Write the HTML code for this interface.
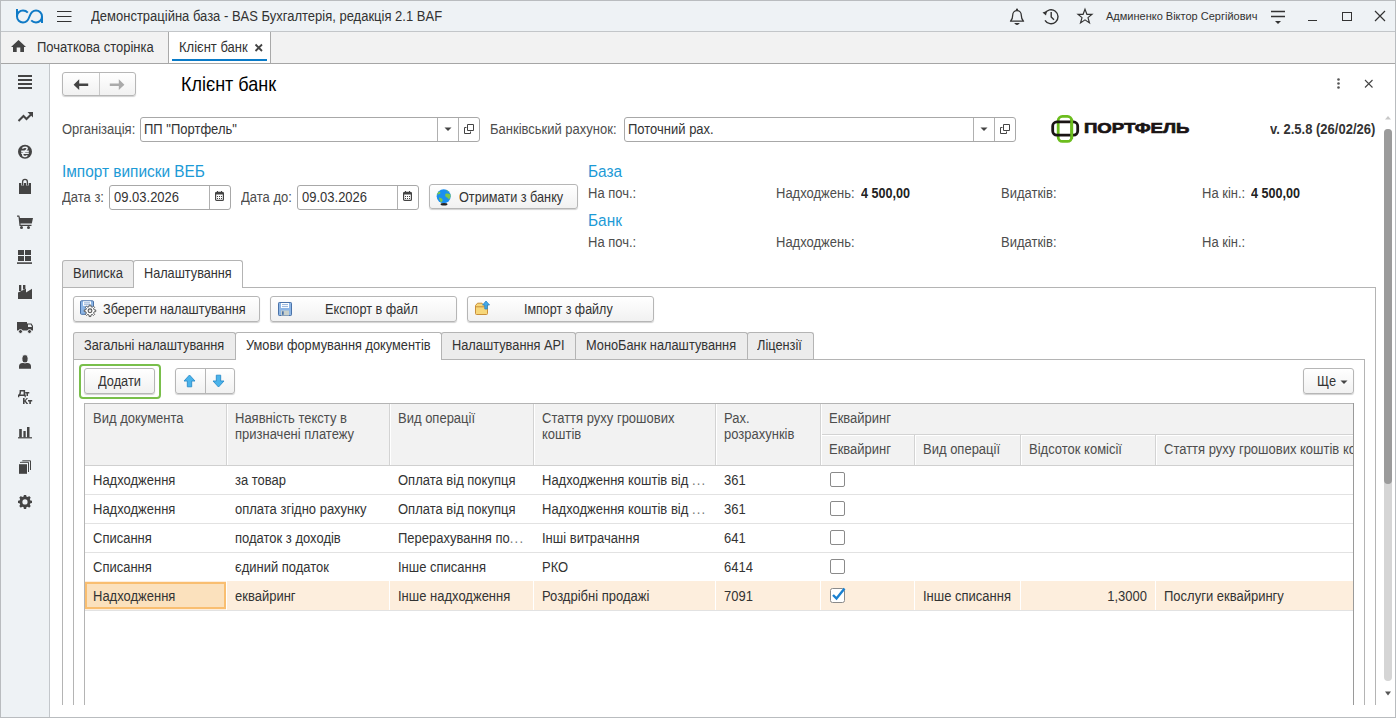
<!DOCTYPE html>
<html><head><meta charset="utf-8">
<style>
*{box-sizing:border-box;margin:0;padding:0}
html,body{width:1396px;height:718px;overflow:hidden;background:#fff;font-family:"Liberation Sans",sans-serif;font-size:13px;color:#333}
.a{position:absolute;white-space:nowrap;line-height:1;transform:scaleY(1.11);transform-origin:0 11px}
#win{position:absolute;left:0;top:0;width:1396px;height:718px;background:#fff;overflow:hidden}
.r{position:absolute}
.ico{position:absolute;overflow:visible}
.btn{position:absolute;border:1px solid #b6b6b6;border-radius:3px;background:linear-gradient(#fff,#f1f1f1);box-shadow:0 1px 1px rgba(0,0,0,.18);color:#333}
.inp{position:absolute;border:1px solid #a8a8a8;border-radius:3px;background:#fff}
.lbl{color:#4d4d4d}
</style></head><body>
<div id="win">
<!-- title bar -->
<div class="r" style="left:0;top:0;width:1396px;height:31px;background:#eef2f5"></div>
<div class="r" style="left:0;top:31px;width:1396px;height:1px;background:#c3c6c9"></div>
<svg class="ico" style="left:16px;top:9px" width="28" height="15" viewBox="0 0 28 15"><g fill="none" stroke="#0f7ac6" stroke-width="2"><path d="M1 0V7.5A6 6 0 0 0 7 13.5C10.4 13.5 12.4 10.8 13.5 7.5C14.6 4.2 16.6 1.5 20 1.5A6 6 0 0 1 26 7.5V14"/><path d="M1 7.5A6 6 0 0 1 7 1.5C9 1.5 10.6 2.3 11.8 3.6"/><path d="M26 7.5A6 6 0 0 1 20 13.5C18 13.5 16.4 12.7 15.2 11.4"/></g></svg>
<svg class="ico" style="left:57px;top:10px" width="15" height="13"><g stroke="#333" stroke-width="1.2"><path d="M0 1.5H14.5M0 6.5H14.5M0 11.5H14.5"/></g></svg>
<div class="a" style="left:91px;top:10px;font-size:13px;color:#333">Демонстраційна база - BAS Бухгалтерія, редакція 2.1 BAF</div>
<!-- bell -->
<svg class="ico" style="left:1009px;top:8px" width="16" height="17" viewBox="0 0 16 17"><path d="M1.5 13.2C2.8 12 3.7 10.5 3.7 7.2C3.7 4.6 5.6 2.7 8 2.7C10.4 2.7 12.3 4.6 12.3 7.2C12.3 10.5 13.2 12 14.5 13.2Z" fill="none" stroke="#333" stroke-width="1.3" stroke-linejoin="round"/><circle cx="8" cy="1.7" r="1.1" fill="#333"/><path d="M5.3 15.1H10.7C10.2 16.2 9.2 16.9 8 16.9C6.8 16.9 5.8 16.2 5.3 15.1Z" fill="#333"/></svg>
<!-- history -->
<svg class="ico" style="left:1042px;top:8px" width="18" height="17" viewBox="0 0 18 17"><g fill="none" stroke="#333" stroke-width="1.4"><path d="M2.8 5.5A7 7 0 1 1 3 12.3"/><path d="M9.2 4V9L12 11.8"/></g><path d="M0.5 4.5L5 3L4 7.5Z" fill="#333"/></svg>
<!-- star -->
<svg class="ico" style="left:1077px;top:8px" width="17" height="17" viewBox="0 0 17 17"><path d="M8 1.2L9.9 6.3H15L11 9.6L12.5 15L8 11.9L3.5 15L5 9.6L1 6.3H6.1Z" fill="none" stroke="#333" stroke-width="1.15" stroke-linejoin="miter"/></svg>
<div class="a" style="left:1106px;top:11px;font-size:11px;color:#333;transform:none">Админенко Віктор Сергійович</div>
<!-- filter -->
<svg class="ico" style="left:1270px;top:10px" width="16" height="15"><g stroke="#333" stroke-width="1.3"><path d="M1 1.5H15M1 6.5H15"/></g><path d="M5 11H11L8 14Z" fill="#333"/></svg>
<div class="r" style="left:1308px;top:20px;width:9px;height:1.3px;background:#333"></div>
<div class="r" style="left:1342px;top:11.5px;width:9.5px;height:9.5px;border:1.3px solid #333"></div>
<svg class="ico" style="left:1374px;top:10px" width="12" height="12"><g stroke="#333" stroke-width="1.2"><path d="M1 1L11 11M11 1L1 11"/></g></svg>
<!-- tabs bar -->
<div class="r" style="left:0;top:32px;width:1396px;height:31px;background:#f2f2f2"></div>
<div class="r" style="left:0;top:63px;width:1396px;height:1px;background:#a6a6a6"></div>
<svg class="ico" style="left:11px;top:40px" width="16" height="13" viewBox="0 0 16 13"><path d="M7.5 0L15 7H13V12H9.3V7.5H5.7V12H2V7H0Z" fill="#444"/></svg>
<div class="a" style="left:37px;top:41px;font-size:13px;color:#333">Початкова сторінка</div>
<div class="r" style="left:168px;top:32px;width:103px;height:31px;background:#fff;border-left:1px solid #a9a9a9;border-right:1px solid #a9a9a9"></div>
<div class="r" style="left:172px;top:59px;width:95px;height:2px;background:#0a7bc8"></div>
<div class="a" style="left:179px;top:41px;font-size:13px;color:#333">Клієнт банк</div>
<svg class="ico" style="left:255px;top:44px" width="8" height="8"><g stroke="#444" stroke-width="1.8"><path d="M0.5 0.5L7 7M7 0.5L0.5 7"/></g></svg>
<!-- sidebar -->
<div class="r" style="left:0;top:64px;width:50px;height:654px;background:#eef2f5;border-right:1px solid #c3c7cb"></div>
<svg class="ico" style="left:0;top:64px" width="49" height="654" viewBox="0 64 49 654">
<g fill="#444">
<rect x="18" y="75" width="14" height="2"/><rect x="18" y="79" width="14" height="2"/><rect x="18" y="83" width="14" height="2"/><rect x="18" y="87" width="14" height="2"/>
</g>
<path d="M18.5 121L23.5 116L26.5 119L31 114.5" fill="none" stroke="#444" stroke-width="2"/>
<path d="M27.5 112H33V117.5Z" fill="#444"/>
<circle cx="25" cy="151.8" r="7" fill="#444"/>
<g stroke="#eef2f5" stroke-width="1.5" fill="none"><path d="M22.5 148.6C23 146.8 27.2 146.6 27.2 148.6C27.2 150.2 22.6 152.8 22.6 154.8C22.6 156.8 26.5 157 27.3 155.4"/><path d="M21.2 151.2H28.8M21.2 153.3H28.8"/></g>
<path d="M19 183H31V194H19Z" fill="#444"/>
<path d="M22.6 185.5V181.8A2.4 2.4 0 0 1 27.4 181.8V185.5" fill="none" stroke="#eef2f5" stroke-width="2.6"/><path d="M22.6 185.5V181.8A2.4 2.4 0 0 1 27.4 181.8V185.5" fill="none" stroke="#444" stroke-width="1.3"/>
<path d="M17 215.5H19.3L20 218H33L31.8 223.5H20.5V224.8H31.5V226H19.5L18.5 216.8H17Z" fill="#444"/>
<circle cx="21.5" cy="227.6" r="1.5" fill="#444"/><circle cx="28.5" cy="227.6" r="1.5" fill="#444"/>
<g fill="#444"><rect x="18" y="250" width="6" height="5"/><rect x="25" y="250" width="6" height="5"/><rect x="18" y="256" width="6" height="5"/><rect x="25" y="256" width="6" height="5"/><rect x="17" y="262.3" width="15" height="1.6"/></g>
<path d="M18 299V292.5L26 288.8V292.5L32 288.8V299Z" fill="#444"/>
<rect x="19" y="285" width="2.3" height="6" fill="#444"/><rect x="23" y="285" width="2.4" height="4.5" fill="#444"/>
<path d="M17 322H27V323.5H31.5L33 326V330.5H17Z" fill="#444"/>
<path d="M28 324.5H30.8L32 327H28Z" fill="#eef2f5"/>
<circle cx="20.5" cy="331.5" r="2" fill="#444" stroke="#eef2f5" stroke-width="0.9"/><circle cx="29.5" cy="331.5" r="2" fill="#444" stroke="#eef2f5" stroke-width="0.9"/>
<path d="M19 368.8V366.5A3.5 3.5 0 0 1 22.5 363H27.5A3.5 3.5 0 0 1 31 366.5V368.8Z" fill="#444"/>
<ellipse cx="25" cy="358.8" rx="3.1" ry="4.1" fill="#444" stroke="#eef2f5" stroke-width="0.9"/>
<g fill="#444"><path d="M19.6 390H25.1V394.6H25.8V397.2H24.6V396.1H19.3V397.2H18V394.6H18.8C19.5 393.5 19.6 392 19.6 390.9ZM21 391.4V392.2C21 393.2 20.8 394 20.4 394.6H23.6V391.4Z"/><path d="M25.2 392H29.3V393.5H28V396.1H26.5V393.5H25.2Z"/><path d="M23 398H24.6V400.4L26.6 398H28L25.7 400.8L28.2 404H26.5L24.6 401.5V404H23Z"/><path d="M28 400H32.2V401.5H30.9V404H29.3V401.5H28Z"/></g>
<g fill="#444"><rect x="19.2" y="429" width="2.6" height="8.5"/><rect x="23.4" y="431" width="2.3" height="6.5"/><rect x="27" y="427" width="2.5" height="10.5"/><rect x="18" y="437.2" width="14" height="1.2"/></g>
<rect x="19" y="464.2" width="8" height="9.6" fill="#444"/>
<path d="M20.5 463V462.3H28.5V472" fill="none" stroke="#444" stroke-width="1"/>
<path d="M22.3 460.8H30.5V470" fill="none" stroke="#444" stroke-width="1"/>
<path d="M23.65 496.47L23.83 494.90L26.17 494.90L26.35 496.47L27.89 497.10L29.13 496.12L30.78 497.77L29.80 499.01L30.43 500.55L32.00 500.73L32.00 503.07L30.43 503.25L29.80 504.79L30.78 506.03L29.13 507.68L27.89 506.70L26.35 507.33L26.17 508.90L23.83 508.90L23.65 507.33L22.11 506.70L20.87 507.68L19.22 506.03L20.20 504.79L19.57 503.25L18.00 503.07L18.00 500.73L19.57 500.55L20.20 499.01L19.22 497.77L20.87 496.12L22.11 497.10Z" fill="#444"/>
<circle cx="25" cy="501.9" r="2.6" fill="#eef2f5"/>
</svg>
<!-- content header -->
<div class="btn" style="left:62px;top:72px;width:74px;height:24px"></div>
<div class="r" style="left:99px;top:73px;width:1px;height:22px;background:#c8c8c8"></div>
<svg class="ico" style="left:73px;top:79px" width="16" height="12" viewBox="0 0 16 12"><path d="M0.6 5.7L6.2 0.3V4.4H15.2V7H6.2V11.1Z" fill="#444"/></svg>
<svg class="ico" style="left:109px;top:79px" width="16" height="12" viewBox="0 0 16 12"><path d="M15.4 5.7L9.8 0.3V4.4H0.8V7H9.8V11.1Z" fill="#aaa"/></svg>
<div class="a" style="left:181px;top:76px;font-size:18px;color:#000;transform:scaleY(1.077);transform-origin:0 15px">Клієнт банк</div>
<svg class="ico" style="left:1336px;top:78px" width="5" height="12"><g fill="#555"><circle cx="2.5" cy="1.5" r="1.3"/><circle cx="2.5" cy="5.5" r="1.3"/><circle cx="2.5" cy="9.5" r="1.3"/></g></svg>
<svg class="ico" style="left:1364px;top:79px" width="10" height="10"><path d="M1 1L8.5 8.5M8.5 1L1 8.5" stroke="#444" stroke-width="1.1"/></svg>
<!-- org row -->
<div class="a lbl" style="left:62px;top:123px">Організація:</div>
<div class="inp" style="left:140px;top:117px;width:340px;height:25px"></div>
<div class="r" style="left:437px;top:118px;width:1px;height:23px;background:#b0b0b0"></div>
<div class="r" style="left:458px;top:118px;width:1px;height:23px;background:#b0b0b0"></div>
<div class="a" style="left:144px;top:123px;color:#333">ПП "Портфель"</div>
<svg class="ico" style="left:444px;top:127px" width="8" height="5"><path d="M0.5 0.5H7.5L4 4Z" fill="#444"/></svg>
<svg class="ico" style="left:464px;top:124px" width="10" height="10" viewBox="0 0 10 10"><g fill="none" stroke="#444" stroke-width="1"><path d="M3.5 0.5H9.5V6.5H3.5Z"/><path d="M2.5 3.5H0.5V9.5H6.5V7.5"/></g></svg>
<div class="a lbl" style="left:490px;top:123px">Банківський рахунок:</div>
<div class="inp" style="left:624px;top:117px;width:392px;height:25px"></div>
<div class="r" style="left:973px;top:118px;width:1px;height:23px;background:#b0b0b0"></div>
<div class="r" style="left:994px;top:118px;width:1px;height:23px;background:#b0b0b0"></div>
<div class="a" style="left:628px;top:123px;color:#333">Поточний рах.</div>
<svg class="ico" style="left:980px;top:127px" width="8" height="5"><path d="M0.5 0.5H7.5L4 4Z" fill="#444"/></svg>
<svg class="ico" style="left:1000px;top:124px" width="10" height="10" viewBox="0 0 10 10"><g fill="none" stroke="#444" stroke-width="1"><path d="M3.5 0.5H9.5V6.5H3.5Z"/><path d="M2.5 3.5H0.5V9.5H6.5V7.5"/></g></svg>
<!-- logo -->
<svg class="ico" style="left:1050px;top:114px" width="30" height="30" viewBox="0 0 30 30"><rect x="8.2" y="2.4" width="13.5" height="25" rx="4.2" fill="none" stroke="#6cbd1e" stroke-width="2.8"/><rect x="2.7" y="7.9" width="25" height="13.3" rx="4.2" fill="none" stroke="#1a1414" stroke-width="2.8"/><path d="M21.7 5V25" stroke="#6cbd1e" stroke-width="2.8"/></svg>
<div class="a" style="left:1084px;top:120px;font-size:15.5px;font-weight:bold;color:#1a1414;-webkit-text-stroke:0.7px #1a1414;transform:scaleX(1.2);transform-origin:0 0">ПОРТФЕЛЬ</div>
<div class="a" style="left:1270px;top:123px;font-size:13px;font-weight:bold;color:#333">v. 2.5.8 (26/02/26)</div>
<!-- form tabs -->
<div class="r" style="left:62px;top:260px;width:72px;height:28px;background:#ececec;border:1px solid #b4b4b4;border-bottom:none;border-radius:3px 3px 0 0"></div>
<div class="a" style="left:73px;top:267px;color:#333">Виписка</div>
<div class="r" style="left:133px;top:260px;width:110px;height:28px;background:#fff;border:1px solid #b4b4b4;border-bottom:none;border-radius:3px 3px 0 0"></div>
<div class="a" style="left:144px;top:268px;color:#333;font-size:12.7px">Налаштування</div>
<div class="r" style="left:62px;top:287px;width:1314px;height:418px;border:1px solid #b4b4b4;border-top:none;border-bottom:none"></div>
<div class="r" style="left:62px;top:287px;width:71px;height:1px;background:#b4b4b4"></div>
<div class="r" style="left:243px;top:287px;width:1133px;height:1px;background:#b4b4b4"></div>
<!-- settings buttons -->
<div class="btn" style="left:73px;top:296px;width:187px;height:26px"></div>
<div class="a" style="left:103px;top:304px;color:#333;font-size:12.7px">Зберегти налаштування</div>
<svg class="ico" style="left:80px;top:300px" width="17" height="17" viewBox="0 0 17 17"><rect x="0.5" y="0.8" width="13" height="13.5" rx="1" fill="#8db6e6" stroke="#4a72a8" stroke-width="1"/><rect x="3" y="1.3" width="8" height="4.5" fill="#fff"/><path d="M4 2.8H10M4 4.3H10" stroke="#7aa0d0" stroke-width="0.8"/><path d="M9.08 6.60L9.14 5.06L10.86 5.06L10.92 6.60L12.32 7.18L13.45 6.13L14.67 7.35L13.62 8.48L14.20 9.88L15.74 9.94L15.74 11.66L14.20 11.72L13.62 13.12L14.67 14.25L13.45 15.47L12.32 14.42L10.92 15.00L10.86 16.54L9.14 16.54L9.08 15.00L7.68 14.42L6.55 15.47L5.33 14.25L6.38 13.12L5.80 11.72L4.26 11.66L4.26 9.94L5.80 9.88L6.38 8.48L5.33 7.35L6.55 6.13L7.68 7.18Z" fill="#fff" stroke="#5a5a5a" stroke-width="1"/><circle cx="10" cy="10.8" r="1.9" fill="#e8e8e8" stroke="#555" stroke-width="1.1"/></svg>
<div class="btn" style="left:270px;top:296px;width:187px;height:26px"></div>
<svg class="ico" style="left:278px;top:302px" width="14" height="14" viewBox="0 0 14 14"><rect x="0.5" y="0.5" width="13" height="13" rx="0.8" fill="#8db6e6" stroke="#4a72a8" stroke-width="1"/><rect x="3" y="1" width="8" height="5" fill="#fff"/><path d="M4 2.6H10M4 4.6H10" stroke="#7aa0d0" stroke-width="0.8"/><rect x="3" y="8.5" width="8" height="5" fill="#c8d0cc"/><rect x="4" y="9.3" width="1.7" height="3.5" fill="#4a72a8"/></svg>
<div class="a" style="left:325px;top:304px;color:#333;font-size:12.7px">Експорт в файл</div>
<div class="btn" style="left:467px;top:296px;width:187px;height:26px"></div>
<svg class="ico" style="left:474px;top:300px" width="18" height="16" viewBox="0 0 18 16"><path d="M1.5 13.5V5.5L3.5 3.2H8L9.5 4.8H13.5V13.5A1 1 0 0 1 12.5 14.5H2.5A1 1 0 0 1 1.5 13.5Z" fill="#f7d77a" stroke="#c98f3a" stroke-width="1"/><path d="M1.5 6.8H13.5" stroke="#c98f3a" stroke-width="1"/><path d="M10.8 9V5H8.6L12 1L15.5 5H13.3V9Z" fill="#45aae8" stroke="#2a84c8" stroke-width="0.8"/></svg>
<div class="a" style="left:524px;top:304px;color:#333;font-size:12.5px">Імпорт з файлу</div>
<!-- inner tabs -->
<div class="r" style="left:73px;top:332px;width:163px;height:28px;background:#ececec;border:1px solid #b4b4b4;border-bottom:none;border-radius:3px 3px 0 0"></div>
<div class="a" style="left:84px;top:340px;color:#333;font-size:12.8px">Загальні налаштування</div>
<div class="r" style="left:235px;top:332px;width:207px;height:28px;background:#fff;border:1px solid #b4b4b4;border-bottom:none;border-radius:3px 3px 0 0"></div>
<div class="a" style="left:246px;top:340px;color:#333;font-size:12.8px">Умови формування документів</div>
<div class="r" style="left:441px;top:332px;width:135px;height:28px;background:#ececec;border:1px solid #b4b4b4;border-bottom:none;border-radius:3px 3px 0 0"></div>
<div class="a" style="left:452px;top:340px;color:#333;font-size:12.8px">Налаштування API</div>
<div class="r" style="left:575px;top:332px;width:173px;height:28px;background:#ececec;border:1px solid #b4b4b4;border-bottom:none;border-radius:3px 3px 0 0"></div>
<div class="a" style="left:586px;top:340px;color:#333;font-size:12.8px">МоноБанк налаштування</div>
<div class="r" style="left:747px;top:332px;width:67px;height:28px;background:#ececec;border:1px solid #b4b4b4;border-bottom:none;border-radius:3px 3px 0 0"></div>
<div class="a" style="left:757px;top:340px;color:#333;font-size:12.8px">Ліцензії</div>
<div class="r" style="left:73px;top:359px;width:1292px;height:346px;border:1px solid #b4b4b4;border-top:none;border-bottom:none"></div>
<div class="r" style="left:73px;top:359px;width:163px;height:1px;background:#b4b4b4"></div>
<div class="r" style="left:441px;top:359px;width:924px;height:1px;background:#b4b4b4"></div>
<!-- toolbar -->
<div class="r" style="left:79px;top:364px;width:82px;height:35px;border:2px solid #79bf4b;border-radius:4px"></div>
<div class="btn" style="left:84px;top:368px;width:71px;height:26px"></div>
<div class="a" style="left:98px;top:376px;color:#333;font-size:12.8px">Додати</div>
<div class="btn" style="left:175px;top:368px;width:60px;height:26px"></div>
<div class="r" style="left:205px;top:369px;width:1px;height:24px;background:#b6b6b6"></div>
<svg class="ico" style="left:183px;top:374px" width="13" height="14" viewBox="0 0 13 14"><path d="M6.5 1L12 7H8.7V12.8H4.3V7H1Z" fill="#4ab3ea" stroke="#2a8ccb" stroke-width="0.9"/></svg>
<svg class="ico" style="left:212px;top:374px" width="13" height="14" viewBox="0 0 13 14"><path d="M6.5 13L12 7H8.7V1.2H4.3V7H1Z" fill="#4ab3ea" stroke="#2a8ccb" stroke-width="0.9"/></svg>
<div class="btn" style="left:1303px;top:368px;width:51px;height:26px"></div>
<div class="a" style="left:1317px;top:376px;color:#333;font-size:12.8px">Ще</div>
<svg class="ico" style="left:1340px;top:380px" width="8" height="5"><path d="M0.5 0.5H7.5L4 4Z" fill="#444"/></svg>
<!-- table -->
<div class="r" style="left:84px;top:403px;width:1270px;height:302px;border:1px solid #b4b4b4;border-bottom:none;background:#fff"></div>
<div class="r" style="left:85px;top:404px;width:1268px;height:61px;background:#f2f2f2"></div>
<div class="r" style="left:85px;top:465px;width:1268px;height:1px;background:#d0d0d0"></div>
<div class="r" style="left:821px;top:434px;width:532px;height:1px;background:#d3d3d3"></div>
<div class="r" style="left:821px;top:435px;width:532px;height:1px;background:#fff"></div>
<div class="r" style="left:226px;top:404px;width:1px;height:61px;background:#d3d3d3"></div>
<div class="r" style="left:227px;top:404px;width:1px;height:61px;background:#fff"></div>
<div class="r" style="left:389px;top:404px;width:1px;height:61px;background:#d3d3d3"></div>
<div class="r" style="left:390px;top:404px;width:1px;height:61px;background:#fff"></div>
<div class="r" style="left:533px;top:404px;width:1px;height:61px;background:#d3d3d3"></div>
<div class="r" style="left:534px;top:404px;width:1px;height:61px;background:#fff"></div>
<div class="r" style="left:715px;top:404px;width:1px;height:61px;background:#d3d3d3"></div>
<div class="r" style="left:716px;top:404px;width:1px;height:61px;background:#fff"></div>
<div class="r" style="left:820px;top:404px;width:1px;height:61px;background:#d3d3d3"></div>
<div class="r" style="left:821px;top:404px;width:1px;height:61px;background:#fff"></div>
<div class="r" style="left:914px;top:435px;width:1px;height:30px;background:#d3d3d3"></div>
<div class="r" style="left:915px;top:435px;width:1px;height:30px;background:#fff"></div>
<div class="r" style="left:1020px;top:435px;width:1px;height:30px;background:#d3d3d3"></div>
<div class="r" style="left:1021px;top:435px;width:1px;height:30px;background:#fff"></div>
<div class="r" style="left:1155px;top:435px;width:1px;height:30px;background:#d3d3d3"></div>
<div class="r" style="left:1156px;top:435px;width:1px;height:30px;background:#fff"></div>
<div class="r" style="left:85px;top:404px;width:1268px;height:61px;overflow:hidden">
<div class="a" style="left:8px;top:8px;color:#4d4d4d">Вид документа</div>
<div class="a" style="left:150px;top:8px;color:#4d4d4d">Наявність тексту в</div>
<div class="a" style="left:150px;top:24px;color:#4d4d4d">призначені платежу</div>
<div class="a" style="left:313px;top:8px;color:#4d4d4d">Вид операції</div>
<div class="a" style="left:457px;top:8px;color:#4d4d4d">Стаття руху грошових</div>
<div class="a" style="left:457px;top:24px;color:#4d4d4d">коштів</div>
<div class="a" style="left:639px;top:8px;color:#4d4d4d">Рах.</div>
<div class="a" style="left:639px;top:24px;color:#4d4d4d">розрахунків</div>
<div class="a" style="left:744px;top:8px;color:#4d4d4d">Еквайринг</div>
<div class="a" style="left:744px;top:39px;color:#4d4d4d">Еквайринг</div>
<div class="a" style="left:838px;top:39px;color:#4d4d4d">Вид операції</div>
<div class="a" style="left:944px;top:39px;color:#4d4d4d">Відсоток комісії</div>
<div class="a" style="left:1079px;top:39px;color:#4d4d4d">Стаття руху грошових коштів контрагента</div>
</div>
<div class="r" style="left:85px;top:494px;width:1268px;height:1px;background:#e2e2e2"></div>
<div class="a" style="left:93px;top:474px;color:#333">Надходження</div>
<div class="a" style="left:235px;top:474px;color:#333">за товар</div>
<div class="a" style="left:398px;top:474px;color:#333">Оплата від покупця</div>
<div class="a" style="left:542px;top:474px;color:#333">Надходження коштів від <span style="color:#777;letter-spacing:1.2px">...</span></div>
<div class="a" style="left:724px;top:474px;color:#333">361</div>
<div class="r" style="left:830px;top:472px;width:15px;height:15px;border:1px solid #8a8a8a;border-radius:2px;background:#fff"></div>
<div class="r" style="left:85px;top:523px;width:1268px;height:1px;background:#e2e2e2"></div>
<div class="a" style="left:93px;top:503px;color:#333">Надходження</div>
<div class="a" style="left:235px;top:503px;color:#333">оплата згідно рахунку</div>
<div class="a" style="left:398px;top:503px;color:#333">Оплата від покупця</div>
<div class="a" style="left:542px;top:503px;color:#333">Надходження коштів від <span style="color:#777;letter-spacing:1.2px">...</span></div>
<div class="a" style="left:724px;top:503px;color:#333">361</div>
<div class="r" style="left:830px;top:501px;width:15px;height:15px;border:1px solid #8a8a8a;border-radius:2px;background:#fff"></div>
<div class="r" style="left:85px;top:552px;width:1268px;height:1px;background:#e2e2e2"></div>
<div class="a" style="left:93px;top:532px;color:#333">Списання</div>
<div class="a" style="left:235px;top:532px;color:#333">податок з доходів</div>
<div class="a" style="left:398px;top:532px;color:#333">Перерахування по<span style="color:#777;letter-spacing:1.2px">...</span></div>
<div class="a" style="left:542px;top:532px;color:#333">Інші витрачання</div>
<div class="a" style="left:724px;top:532px;color:#333">641</div>
<div class="r" style="left:830px;top:530px;width:15px;height:15px;border:1px solid #8a8a8a;border-radius:2px;background:#fff"></div>
<div class="r" style="left:85px;top:581px;width:1268px;height:1px;background:#e2e2e2"></div>
<div class="a" style="left:93px;top:561px;color:#333">Списання</div>
<div class="a" style="left:235px;top:561px;color:#333">єдиний податок</div>
<div class="a" style="left:398px;top:561px;color:#333">Інше списання</div>
<div class="a" style="left:542px;top:561px;color:#333">РКО</div>
<div class="a" style="left:724px;top:561px;color:#333">6414</div>
<div class="r" style="left:830px;top:559px;width:15px;height:15px;border:1px solid #8a8a8a;border-radius:2px;background:#fff"></div>
<div class="r" style="left:85px;top:581px;width:1268px;height:29px;background:#fdeedd"></div>
<div class="r" style="left:226px;top:581px;width:1px;height:29px;background:#fff"></div>
<div class="r" style="left:389px;top:581px;width:1px;height:29px;background:#fff"></div>
<div class="r" style="left:533px;top:581px;width:1px;height:29px;background:#fff"></div>
<div class="r" style="left:715px;top:581px;width:1px;height:29px;background:#fff"></div>
<div class="r" style="left:820px;top:581px;width:1px;height:29px;background:#fff"></div>
<div class="r" style="left:914px;top:581px;width:1px;height:29px;background:#fff"></div>
<div class="r" style="left:1020px;top:581px;width:1px;height:29px;background:#fff"></div>
<div class="r" style="left:1155px;top:581px;width:1px;height:29px;background:#fff"></div>
<div class="r" style="left:85px;top:582px;width:141px;height:27px;background:#fbe1bd;border:2px solid #f9be70"></div>
<div class="r" style="left:85px;top:610px;width:1268px;height:1px;background:#e2e2e2"></div>
<div class="a" style="left:93px;top:590px;color:#333">Надходження</div>
<div class="a" style="left:235px;top:590px;color:#333">еквайринг</div>
<div class="a" style="left:398px;top:590px;color:#333">Інше надходження</div>
<div class="a" style="left:542px;top:590px;color:#333">Роздрібні продажі</div>
<div class="a" style="left:724px;top:590px;color:#333">7091</div>
<svg class="ico" style="left:830px;top:587px" width="17" height="16" viewBox="0 0 17 16"><rect x="0.5" y="1.5" width="14" height="14" rx="2" fill="#fff" stroke="#8a8a8a" stroke-width="1"/><path d="M3 8L6.5 11.5L14.5 1.5" fill="none" stroke="#1a80d0" stroke-width="2.4"/></svg>
<div class="a" style="left:923px;top:590px;color:#333">Інше списання</div>
<div class="a" style="left:1010px;top:590px;width:137px;text-align:right;color:#333">1,3000</div>
<div class="a" style="left:1164px;top:590px;color:#333">Послуги еквайрингу</div>
<div class="r" style="left:1353px;top:403px;width:1px;height:302px;background:#9a9a9a"></div>
<!-- scrollbar -->
<svg class="ico" style="left:1384px;top:115px" width="8" height="5"><path d="M1 4.5H7L4 1Z" fill="#c8c8c8"/></svg>
<div class="r" style="left:1384px;top:129px;width:8px;height:552px;border-radius:4px;background:#d5d5d5"></div>
<div class="r" style="left:1384px;top:129px;width:8px;height:355px;border-radius:4px;background:#9b9b9b"></div>
<svg class="ico" style="left:1384px;top:691px" width="8" height="5"><path d="M1 0.5H7L4 4.5Z" fill="#555"/></svg>
<!-- import section -->
<div class="a" style="left:62px;top:164px;font-size:15.4px;color:#1c9ad6;transform:scaleY(1.13);transform-origin:0 12px">Імпорт виписки ВЕБ</div>
<div class="a lbl" style="left:62px;top:191px">Дата з:</div>
<div class="inp" style="left:109px;top:185px;width:122px;height:25px"></div>
<div class="r" style="left:209px;top:186px;width:1px;height:23px;background:#b0b0b0"></div>
<div class="a" style="left:114px;top:191px;color:#333">09.03.2026</div>
<div class="a lbl" style="left:241px;top:191px">Дата до:</div>
<div class="inp" style="left:297px;top:185px;width:122px;height:25px"></div>
<div class="r" style="left:397px;top:186px;width:1px;height:23px;background:#b0b0b0"></div>
<div class="a" style="left:302px;top:191px;color:#333">09.03.2026</div>
<svg class="ico" style="left:215px;top:191px" width="9" height="10" viewBox="0 0 9 10"><rect x="0.6" y="1.3" width="7.8" height="8.1" rx="1" fill="none" stroke="#444" stroke-width="1.2"/><rect x="0.6" y="1.3" width="7.8" height="2.2" fill="#444"/><g fill="#444"><rect x="2" y="0" width="1" height="1.5"/><rect x="6" y="0" width="1" height="1.5"/><rect x="2" y="5" width="1" height="1"/><rect x="4" y="5" width="1" height="1"/><rect x="6" y="5" width="1" height="1"/><rect x="2" y="7" width="1" height="1"/><rect x="4" y="7" width="1" height="1"/><rect x="6" y="7" width="1" height="1"/></g></svg>
<svg class="ico" style="left:403px;top:191px" width="9" height="10" viewBox="0 0 9 10"><rect x="0.6" y="1.3" width="7.8" height="8.1" rx="1" fill="none" stroke="#444" stroke-width="1.2"/><rect x="0.6" y="1.3" width="7.8" height="2.2" fill="#444"/><g fill="#444"><rect x="2" y="0" width="1" height="1.5"/><rect x="6" y="0" width="1" height="1.5"/><rect x="2" y="5" width="1" height="1"/><rect x="4" y="5" width="1" height="1"/><rect x="6" y="5" width="1" height="1"/><rect x="2" y="7" width="1" height="1"/><rect x="4" y="7" width="1" height="1"/><rect x="6" y="7" width="1" height="1"/></g></svg>
<div class="btn" style="left:429px;top:184px;width:149px;height:25px"></div>
<svg class="ico" style="left:436px;top:189px" width="16" height="17" viewBox="0 0 16 17"><circle cx="7.7" cy="7.3" r="7" fill="#1a8ff0"/><path d="M3 2.5C4 2.8 5 3.5 4.2 4.6C3.5 5.5 2 5 1.2 6.5L1.5 4.2Z M9.5 4.8C11 4.2 13 4.5 14.5 5.5C14.8 7.5 14 9.5 13 10.5C12 9.5 11.5 8.5 10 8C9 7.5 9 5.5 9.5 4.8Z M3 8.5C4.5 8.5 6.5 9.5 6.8 11C6.5 12.5 5.5 13 5 13.5C4 12 3 10 3 8.5Z M10.5 1C11.5 1.3 12.5 2 12 2.5C11 2.5 10.5 1.8 10.5 1Z" fill="#7dc74a"/><ellipse cx="8" cy="15.3" rx="3.5" ry="1.2" fill="#222"/></svg>
<div class="a" style="left:459px;top:192px;color:#333;font-size:12.7px">Отримати з банку</div>
<div class="a" style="left:588px;top:164px;font-size:15.4px;color:#1c9ad6;transform:scaleY(1.13);transform-origin:0 12px">База</div>
<div class="a lbl" style="left:588px;top:187px">На поч.:</div>
<div class="a lbl" style="left:776px;top:187px">Надходжень:</div>
<div class="a" style="left:861px;top:187px;font-size:13px;font-weight:bold;color:#222;transform:scale(0.97,1.1)">4 500,00</div>
<div class="a lbl" style="left:1001px;top:187px">Видатків:</div>
<div class="a lbl" style="left:1202px;top:187px">На кін.:</div>
<div class="a" style="left:1251px;top:187px;font-size:13px;font-weight:bold;color:#222;transform:scale(0.97,1.1)">4 500,00</div>
<div class="a" style="left:588px;top:213px;font-size:15.4px;color:#1c9ad6;transform:scaleY(1.13);transform-origin:0 12px">Банк</div>
<div class="a lbl" style="left:588px;top:236px">На поч.:</div>
<div class="a lbl" style="left:776px;top:236px">Надходжень:</div>
<div class="a lbl" style="left:1001px;top:236px">Видатків:</div>
<div class="a lbl" style="left:1202px;top:236px">На кін.:</div>
<!-- window borders -->
<div class="r" style="left:0;top:0;width:1px;height:718px;background:#b9bcbf"></div>
<div class="r" style="left:1395px;top:0;width:1px;height:718px;background:#b9bcbf"></div>
<div class="r" style="left:0;top:0;width:1396px;height:1px;background:#b9bcbf"></div>
<div class="r" style="left:0;top:717px;width:1396px;height:1px;background:#b9bcbf"></div>
</div>
</body></html>
